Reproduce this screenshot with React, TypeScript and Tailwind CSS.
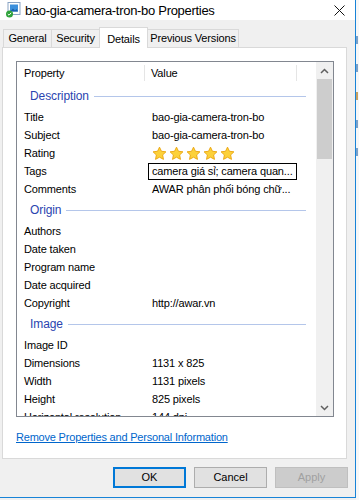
import React from "react";

const font = { fontFamily: "'Liberation Sans', Arial, sans-serif" };

function Star() {
  return (
    <svg width="15" height="15" viewBox="0 0 24 24" className="shrink-0">
      <path
        d="M12 1.8l3.1 6.6 7.2.9-5.3 5 1.4 7.1L12 17.9l-6.4 3.5 1.4-7.1-5.3-5 7.2-.9z"
        fill="#fcd13a"
        stroke="#e9a20c"
        strokeWidth="1.4"
        strokeLinejoin="round"
      />
    </svg>
  );
}

function Row({ label, value }: { label: string; value?: React.ReactNode }) {
  return (
    <div className="flex h-[18px] items-center text-[11px] tracking-[-0.15px] text-black">
      <div className="w-[135px] shrink-0 pl-[7px] whitespace-nowrap">{label}</div>
      <div className="w-[150px] shrink-0 whitespace-nowrap">{value}</div>
    </div>
  );
}

function Group({ title }: { title: string }) {
  return (
    <div className="flex h-[24px] items-center pl-[13px] pr-[10px]">
      <span className="text-[12px] tracking-[-0.1px] text-[#2a44b0]">{title}</span>
      <div className="ml-[5px] h-px flex-1 bg-[#b4c6ea]" />
    </div>
  );
}

export default function App() {
  const tabs = [
    { name: "General", w: "w-[49px]" },
    { name: "Security", w: "w-[49px]" },
    { name: "Details", w: "w-[49px]" },
    { name: "Previous Versions", w: "w-[92px]" },
  ];

  return (
    <div className="flex h-[500px] w-[359px] overflow-hidden bg-[#f0f0f0]" style={font}>
      {/* WINDOW */}
      <div className="flex h-[498px] w-[356px] shrink-0 flex-col border-r border-b border-[#1883d7] bg-[#f0f0f0]">
        {/* TITLE BAR */}
        <div className="flex h-[20px] items-center bg-white">
          <div className="relative ml-[5px] h-[16px] w-[16px]">
            <svg width="16" height="16" viewBox="0 0 16 16">
              <rect x="3" y="0.5" width="12" height="12" fill="#ffffff" stroke="#8aa4c4" />
              <rect x="5" y="2.5" width="8" height="7" fill="#3a8fdc" />
              <path d="M5 9.5l3-3 2 2 1.5-1.5 1.5 2.5z" fill="#1a5fa8" />
              <circle cx="4.5" cy="12" r="3.5" fill="#2fa23a" />
              <path d="M2.8 12l1.2 1.2 2.2-2.4" stroke="#fff" strokeWidth="1" fill="none" />
            </svg>
          </div>
          <span className="ml-[4px] text-[13px] leading-none tracking-[-0.3px] text-black">
            bao-gia-camera-tron-bo Properties
          </span>
          <div className="ml-auto mr-[10px]">
            <svg width="11" height="11" viewBox="0 0 11 11">
              <path d="M0.5 0.5l10 10M10.5 0.5l-10 10" stroke="#111" strokeWidth="1" />
            </svg>
          </div>
        </div>

        {/* TABS */}
        <div className="mt-[7px] flex h-[20px] items-end pl-[3px]">
          {tabs.map((t) =>
            t.name === "Details" ? (
              <div
                key={t.name}
                className={`relative z-10 -mb-px -ml-px flex h-[21px] shrink-0 justify-center border border-b-0 border-[#d9d9d9] bg-white pt-[3px] text-[11px] tracking-[-0.15px] whitespace-nowrap text-black ${t.w}`}
              >
                {t.name}
              </div>
            ) : (
              <div
                key={t.name}
                className={`-ml-px flex h-[18px] shrink-0 items-center justify-center border border-b-0 border-[#d9d9d9] bg-[#f0f0f0] text-[11px] tracking-[-0.15px] whitespace-nowrap text-black first:ml-0 ${t.w}`}
              >
                {t.name}
              </div>
            )
          )}
        </div>

        {/* PANEL */}
        <div className="ml-[2px] flex h-[412px] w-[345px] flex-col border border-[#d9d9d9] bg-white px-[13px] pt-[13px]">
          {/* LIST */}
          <div className="flex h-[356px] w-[318px] border border-[#828790]">
            <div className="flex-1 overflow-hidden">
              {/* header */}
              <div className="flex h-[22px] items-center text-[11px] tracking-[-0.15px] text-black">
                <div className="w-[128px] shrink-0 border-r border-[#e5e5e5] pl-[7px]">Property</div>
                <div className="w-[152px] shrink-0 border-r border-[#e5e5e5] pl-[6px]">Value</div>
              </div>
              <Group title="Description" />
              <Row label="Title" value="bao-gia-camera-tron-bo" />
              <Row label="Subject" value="bao-gia-camera-tron-bo" />
              <Row
                label="Rating"
                value={
                  <div className="flex gap-[2px]">
                    <Star />
                    <Star />
                    <Star />
                    <Star />
                    <Star />
                  </div>
                }
              />
              <Row
                label="Tags"
                value={
                  <div className="-ml-[4px] flex h-[17px] w-[149px] items-center border border-black pl-[3px]">
                    camera giá sỉ; camera quan...
                  </div>
                }
              />
              <Row label="Comments" value="AWAR phân phối bóng chữ..." />
              <Group title="Origin" />
              <Row label="Authors" />
              <Row label="Date taken" />
              <Row label="Program name" />
              <Row label="Date acquired" />
              <Row label="Copyright" value="http://awar.vn" />
              <Group title="Image" />
              <Row label="Image ID" />
              <Row label="Dimensions" value="1131 x 825" />
              <Row label="Width" value="1131 pixels" />
              <Row label="Height" value="825 pixels" />
              <Row label="Horizontal resolution" value="144 dpi" />
            </div>

            {/* SCROLLBAR */}
            <div className="flex w-[17px] shrink-0 flex-col bg-[#f0f0f0]">
              <div className="flex h-[17px] items-center justify-center">
                <svg width="9" height="6" viewBox="0 0 9 6">
                  <path d="M1 5l3.5-3.5L8 5" stroke="#606060" strokeWidth="1.5" fill="none" />
                </svg>
              </div>
              <div className="mx-px h-[80px] bg-[#cdcdcd]" />
              <div className="flex-1" />
              <div className="flex h-[17px] items-center justify-center">
                <svg width="9" height="6" viewBox="0 0 9 6">
                  <path d="M1 1l3.5 3.5L8 1" stroke="#606060" strokeWidth="1.5" fill="none" />
                </svg>
              </div>
            </div>
          </div>

          <div className="mt-[12px] text-[11px] leading-[16px] tracking-[-0.2px] text-[#0066cc] underline">
            Remove Properties and Personal Information
          </div>
        </div>

        {/* BUTTONS */}
        <div className="mt-[8px] flex justify-end gap-[8px] pr-[7px]">
          <div className="flex h-[21px] w-[73px] items-center justify-center border-2 border-[#0078d7] bg-[#e1e1e1] text-[11px] text-black">
            OK
          </div>
          <div className="flex h-[21px] w-[73px] items-center justify-center border border-[#adadad] bg-[#e1e1e1] text-[11px] text-black">
            Cancel
          </div>
          <div className="flex h-[21px] w-[73px] items-center justify-center border border-[#bfbfbf] bg-[#cccccc] text-[11px] text-[#a0a0a0]">
            Apply
          </div>
        </div>
      </div>

      {/* WINDOW BEHIND */}
      <div className="flex flex-1 flex-col gap-[20px] bg-[#f7f7f7] pt-[36px]">
        <div className="h-[8px] w-[2px] bg-[#7aa0c8]" />
        <div className="h-[8px] w-[2px] bg-[#7aa0c8]" />
        <div className="h-[8px] w-[2px] bg-[#c8a060]" />
        <div className="h-[8px] w-[2px] bg-[#7aa0c8]" />
        <div className="h-[8px] w-[2px] bg-[#7aa0c8]" />
      </div>
    </div>
  );
}
